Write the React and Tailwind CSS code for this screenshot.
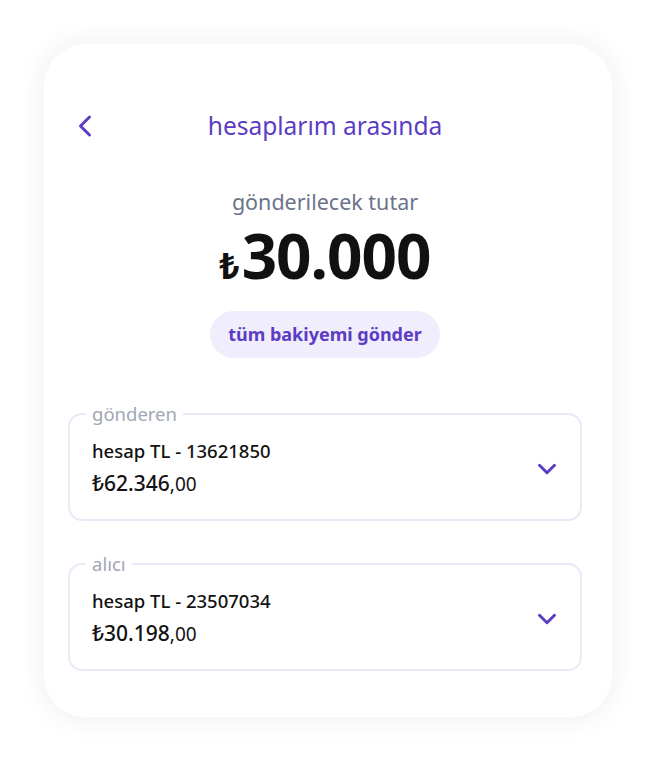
import { ChevronLeft, ChevronDown } from 'lucide-react';

function AccountField({ label, name, whole, cents }) {
  return (
    <fieldset className="border-2 border-[#ebe8f7] rounded-[14px] pl-[22px] pr-[18px] pt-[13px] pb-[18px] flex items-center justify-between">
      <legend className="ml-[-6px] px-[6px] text-[18.5px] leading-[20px] text-[#a1a7b5]">{label}</legend>
      <div className="flex flex-col">
        <span className="text-[18.5px] leading-[28px] font-medium text-[#121212]">{name}</span>
        <span className="mt-[2px] leading-[32px] text-[#121212]">
          <span className="text-[21px] font-medium">{whole}</span>
          <span className="text-[19px]">{cents}</span>
        </span>
      </div>
      <ChevronDown className="w-[30px] h-[30px] text-[#5b3cc4]" strokeWidth={2.4} />
    </fieldset>
  );
}

export default function App() {
  return (
    <div className="min-h-[759px] bg-white pt-[44px] px-[44px] font-['Noto_Sans',sans-serif]">
      <div className="w-[568px] h-[673px] bg-white rounded-[42px] shadow-[0_0_22px_8px_rgba(0,0,0,0.045)] pl-[24px] pr-[30px] pt-[64px]">
        <div className="relative flex items-center justify-center h-[36px]">
          <ChevronLeft className="absolute left-[-1px] w-[36px] h-[36px] text-[#5b3cc4]" strokeWidth={2} />
          <h1 className="text-[24.5px] text-[#5b3cc4]">hesaplarım arasında</h1>
        </div>

        <div className="flex flex-col items-center mt-[44px]">
          <p className="text-[21.5px] leading-[28px] text-[#6b7488]">gönderilecek tutar</p>
          <p className="flex items-baseline mt-[8px] font-bold text-[#111111] leading-none">
            <span className="text-[35px] mr-[2px]">₺</span>
            <span className="text-[62px] tracking-[-1px]">30.000</span>
          </p>
          <button className="mt-[25px] h-[47px] w-[230px] rounded-full bg-[#f0edfc] text-[18px] font-bold text-[#5b3cc4]">
            tüm bakiyemi gönder
          </button>
        </div>

        <div className="flex flex-col gap-[33px] mt-[46px]">
          <AccountField label="gönderen" name="hesap TL - 13621850" whole="₺62.346" cents=",00" />
          <AccountField label="alıcı" name="hesap TL - 23507034" whole="₺30.198" cents=",00" />
        </div>
      </div>
    </div>
  );
}
